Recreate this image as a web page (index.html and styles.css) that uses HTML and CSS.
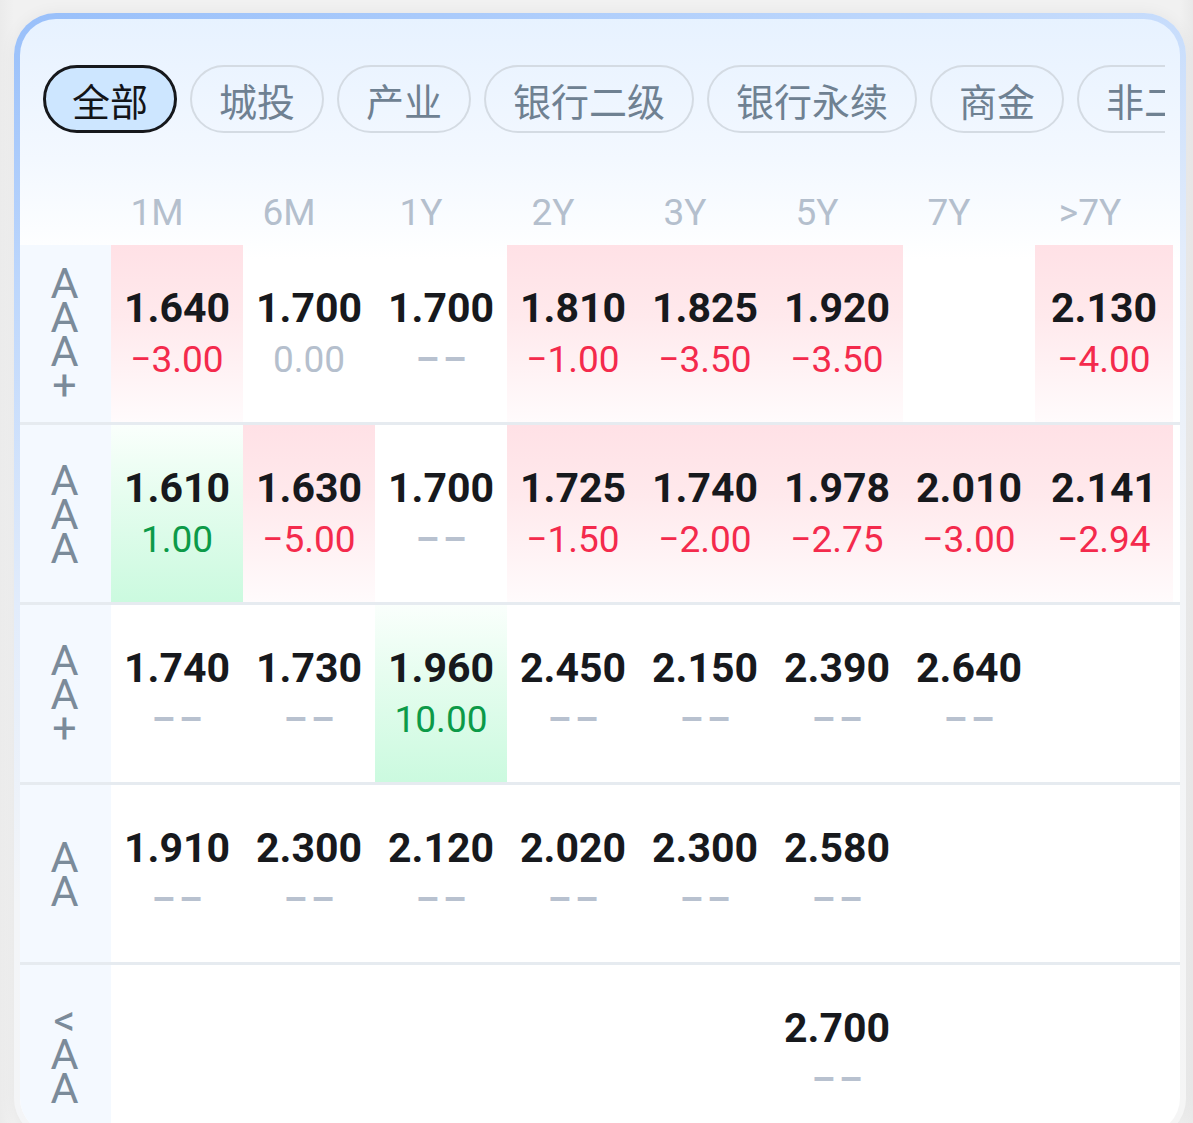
FILE: index.html
```html
<!DOCTYPE html>
<html lang="zh-CN">
<head>
<meta charset="utf-8">
<title>收益率矩阵</title>
<link rel="stylesheet" href="styles.css">
</head>
<body>
<div class="page">
  <div class="frame">
    <div class="card">
      <div class="tabs">
        <span class="tab active">全部</span>
        <span class="tab">城投</span>
        <span class="tab">产业</span>
        <span class="tab">银行二级</span>
        <span class="tab">银行永续</span>
        <span class="tab">商金</span>
        <span class="tab">非二永</span>
      </div>
      <div class="head">
        <span></span><span>1M</span><span>6M</span><span>1Y</span><span>2Y</span><span>3Y</span><span>5Y</span><span>7Y</span><span>&gt;7Y</span>
      </div>
      <div class="row">
        <div class="label">AAA+</div>
        <div class="cell down"><b class="val">1.640</b><span class="chg neg">−3.00</span></div>
        <div class="cell"><b class="val">1.700</b><span class="chg zero">0.00</span></div>
        <div class="cell"><b class="val">1.700</b><span class="chg none">––</span></div>
        <div class="cell down"><b class="val">1.810</b><span class="chg neg">−1.00</span></div>
        <div class="cell down"><b class="val">1.825</b><span class="chg neg">−3.50</span></div>
        <div class="cell down"><b class="val">1.920</b><span class="chg neg">−3.50</span></div>
        <div class="cell"></div>
        <div class="cell down"><b class="val">2.130</b><span class="chg neg">−4.00</span></div>
      </div>
      <div class="row">
        <div class="label">AAA</div>
        <div class="cell up"><b class="val">1.610</b><span class="chg pos">1.00</span></div>
        <div class="cell down"><b class="val">1.630</b><span class="chg neg">−5.00</span></div>
        <div class="cell"><b class="val">1.700</b><span class="chg none">––</span></div>
        <div class="cell down"><b class="val">1.725</b><span class="chg neg">−1.50</span></div>
        <div class="cell down"><b class="val">1.740</b><span class="chg neg">−2.00</span></div>
        <div class="cell down"><b class="val">1.978</b><span class="chg neg">−2.75</span></div>
        <div class="cell down"><b class="val">2.010</b><span class="chg neg">−3.00</span></div>
        <div class="cell down"><b class="val">2.141</b><span class="chg neg">−2.94</span></div>
      </div>
      <div class="row">
        <div class="label">AA+</div>
        <div class="cell"><b class="val">1.740</b><span class="chg none">––</span></div>
        <div class="cell"><b class="val">1.730</b><span class="chg none">––</span></div>
        <div class="cell up"><b class="val">1.960</b><span class="chg pos">10.00</span></div>
        <div class="cell"><b class="val">2.450</b><span class="chg none">––</span></div>
        <div class="cell"><b class="val">2.150</b><span class="chg none">––</span></div>
        <div class="cell"><b class="val">2.390</b><span class="chg none">––</span></div>
        <div class="cell"><b class="val">2.640</b><span class="chg none">––</span></div>
        <div class="cell"></div>
      </div>
      <div class="row">
        <div class="label">AA</div>
        <div class="cell"><b class="val">1.910</b><span class="chg none">––</span></div>
        <div class="cell"><b class="val">2.300</b><span class="chg none">––</span></div>
        <div class="cell"><b class="val">2.120</b><span class="chg none">––</span></div>
        <div class="cell"><b class="val">2.020</b><span class="chg none">––</span></div>
        <div class="cell"><b class="val">2.300</b><span class="chg none">––</span></div>
        <div class="cell"><b class="val">2.580</b><span class="chg none">––</span></div>
        <div class="cell"></div>
        <div class="cell"></div>
      </div>
      <div class="row">
        <div class="label">&lt;AA</div>
        <div class="cell"></div>
        <div class="cell"></div>
        <div class="cell"></div>
        <div class="cell"></div>
        <div class="cell"></div>
        <div class="cell"><b class="val">2.700</b><span class="chg none">––</span></div>
        <div class="cell"></div>
        <div class="cell"></div>
      </div>
    </div>
  </div>
</div>
</body>
</html>
```
FILE: styles.css
```css
html, body {
  margin: 0;
  padding: 0;
  overflow: hidden;
}
body {
  background: linear-gradient(90deg, #ebebeb 0, #f1f1f1 14px, #f1f1f1 1180px, #e9e9e9 100%);
  font-family: Roboto, "Noto Sans CJK SC", sans-serif;
}
.page {
  padding: 13px 7px 0 14px;
}
.frame {
  height: 1127px;
  box-sizing: border-box;
  padding: 6px;
  border-radius: 42px;
  background: linear-gradient(163deg, #98bffa 0%, #bcd6fc 18%, #e2ecfb 40%, #f3f5f8 60%, #f5f5f5 100%);
  box-shadow: 0 0 16px rgba(0, 0, 0, 0.05);
}
.card {
  height: 100%;
  border-radius: 36px;
  overflow: hidden;
  background: linear-gradient(180deg, #e7f2ff 0%, #f3f8ff 140px, #fbfdff 210px, #ffffff 240px);
}
.tabs {
  display: flex;
  gap: 13px;
  margin: 46px 15px 0 23px;
  overflow: hidden;
  white-space: nowrap;
}
.tab {
  flex-shrink: 0;
  height: 68px;
  box-sizing: border-box;
  display: inline-flex;
  align-items: center;
  padding: 0 27px;
  border: 2px solid #d4dbe3;
  border-radius: 34px;
  font-family: "Noto Sans CJK SC", sans-serif;
  font-size: 38px;
  color: #6f8192;
}
.tab.active {
  border: 3px solid #16181c;
  padding: 0 26px;
  background: #cde6ff;
  color: #121418;
}
.head {
  display: grid;
  grid-template-columns: 71px repeat(7, 132px) 150px;
  height: 112px;
  box-sizing: border-box;
  align-items: end;
  padding-bottom: 6px;
  line-height: 52px;
  font-size: 37px;
  color: #b4bfcd;
  text-align: center;
}
.row {
  display: grid;
  grid-template-columns: 91px repeat(7, 132px) 138px;
  height: 180px;
  box-sizing: border-box;
  border-bottom: 3px solid #e6ebf0;
}
.label {
  background: #f4f9ff;
  display: flex;
  align-items: center;
  justify-content: center;
  word-break: break-all;
  font-size: 43px;
  line-height: 34px;
  color: #7b8b9a;
  text-align: center;
  padding: 0 31px 0 29px;
}
.cell {
  display: flex;
  flex-direction: column;
  align-items: center;
  justify-content: center;
}
.cell.down {
  background: linear-gradient(180deg, #ffe1e6 0%, #ffe9ec 40%, #fffbfc 100%);
}
.cell.up {
  background: linear-gradient(180deg, #fafffc 0%, #e6fdef 40%, #cbfadf 100%);
}
.val {
  font-size: 41px;
  font-weight: 700;
  line-height: 52px;
  color: #17191d;
}
.chg {
  font-size: 37px;
  line-height: 52px;
}
.neg { color: #f42a4c; }
.pos { color: #0c9a48; }
.zero { color: #b5bfcd; }
.none {
  color: #b8c1cf;
  font-weight: 700;
  letter-spacing: 4px;
  margin-right: -4px;
}
```
